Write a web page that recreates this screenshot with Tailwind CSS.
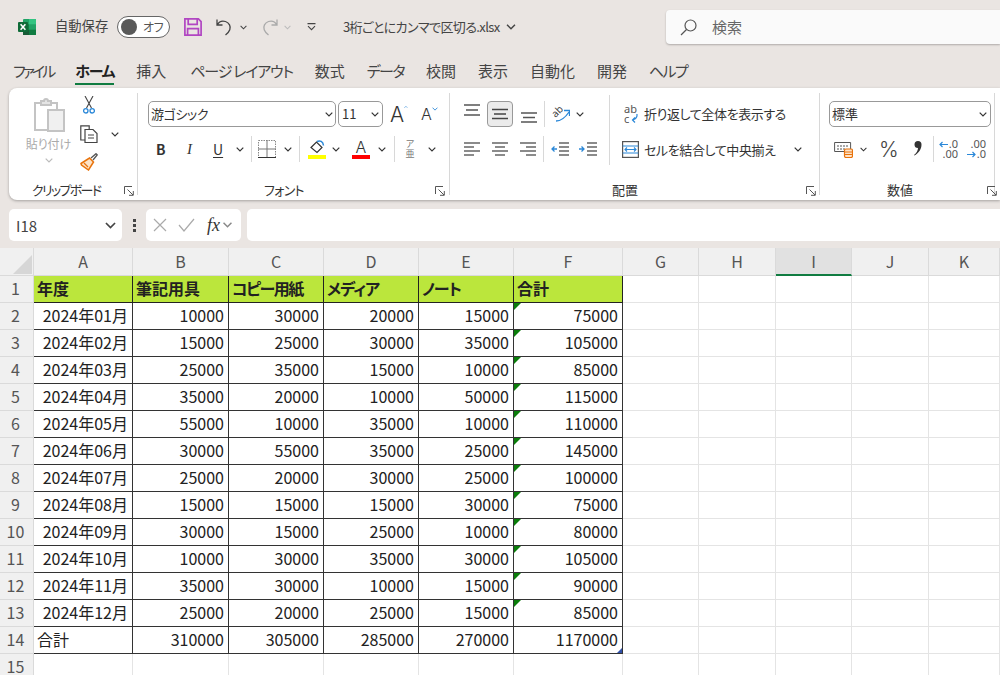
<!DOCTYPE html>
<html lang="ja">
<head>
<meta charset="utf-8">
<script src="https://cdn.jsdelivr.net/npm/@tailwindcss/browser@4"></script>
<title>Excel</title>
</head>
<body class="w-[1000px] h-[675px] overflow-hidden bg-[#eae5e2] text-[#333] font-['Noto_Sans_CJK_JP','Noto_Sans',sans-serif]">
<svg width="0" height="0" class="absolute">
  <symbol id="chev" viewBox="0 0 8 5"><path d="M.7.7 4 4l3.3-3.3" fill="none" stroke="currentColor" stroke-width="1.2"/></symbol>
  <symbol id="launch" viewBox="0 0 10 10"><path d="M.5 8V.5H8M3.5 3.5 9 9M5 9.3h4.3V5" fill="none" stroke="#555" stroke-width="1"/></symbol>
</svg>

<!-- Title bar -->
<header class="h-[54px] flex items-center relative">
  <svg class="ml-[18px] w-[18px] h-[18px]" viewBox="0 0 18 18"><rect x="5" y="1" width="13" height="16" rx="1" fill="#21a366"/><rect x="11" y="1" width="7" height="5.3" fill="#33c481"/><rect x="11" y="11.7" width="7" height="5.3" fill="#107c41"/><rect x="5" y="6.3" width="6" height="5.4" fill="#107c41"/><rect x="5" y="11.7" width="6" height="5.3" fill="#185c37"/><rect y="4" width="10" height="10" rx="1" fill="#0f6b38"/><path d="m2.6 6.2 4.8 5.6M7.4 6.2l-4.8 5.6" stroke="#fff" stroke-width="1.5"/></svg>
  <span class="ml-[19px] w-[53px] text-[13.3px] pb-[2px] leading-none text-[#444] whitespace-nowrap">自動保存</span>
  <div class="ml-[9px] w-[53px] h-[22px] -mt-[1px] rounded-full border border-[#666] bg-white flex items-center pl-[3px]">
    <span class="w-[16px] h-[16px] rounded-full bg-[#595959]"></span>
    <span class="ml-[6px] text-[12px] text-[#555] leading-none tracking-[-0.5px] [font-feature-settings:'palt']">オフ</span>
  </div>
  <svg class="ml-[14px] w-[18px] h-[18px]" viewBox="0 0 18 18" fill="none" stroke="#b146c2" stroke-width="1.7"><path d="M.9.9h13.5l2.7 2.7v13.5H.9z"/><path d="M4.2 1v5.4h9V1M3.6 17v-6.4h10.8V17" /></svg>
  <svg class="ml-[14px] w-[18px] h-[18px]" viewBox="0 0 18 18" fill="none" stroke="#444" stroke-width="1.3"><path d="M1 1.5V7h5.5M1.3 6.8C3 3.6 6.5 2.6 9.500 3.500c3.800 1.200 5.500 5 4.300 8.300-.6 1.800-2.200 3.500-4.300 5.200"/></svg>
  <svg class="ml-[6px] w-[7px] h-[5px] text-[#444]"><use href="#chev"/></svg>
  <svg class="ml-[13px] w-[18px] h-[18px]" viewBox="0 0 18 18" fill="none" stroke="#aaa" stroke-width="1.300"><path d="M17 1.500V7h-5.500M16.700 6.800C15 3.600 11.500 2.600 8.500 3.500c-3.800 1.200-5.500 5-4.300 8.300.6 1.800 2.200 3.500 4.300 5.200"/></svg>
  <svg class="ml-[6px] w-[7px] h-[5px] text-[#bbb]"><use href="#chev"/></svg>
  <svg class="ml-[16px] w-[9px] h-[8px]" viewBox="0 0 9 8" fill="none" stroke="#444" stroke-width="1.100"><path d="M.5.6h8M1 3.200l3.500 3.500L8 3.200"/></svg>
  <span class="ml-[27px] text-[13px] pb-[2px] leading-none text-[#444] whitespace-nowrap tracking-[-0.6px] [font-feature-settings:'palt'] w-[157px]">3桁ごとにカンマで区切る.xlsx</span>
  <svg class="ml-[6px] w-[10px] h-[6px] text-[#444]"><use href="#chev"/></svg>
  <div class="ml-auto self-start mt-[10px] w-[334px] h-[34px] bg-[#fafafa] rounded-l-[4px] shadow-[0_1px_2px_rgba(0,0,0,.25)] flex items-center pl-[14px]">
    <svg class="w-[17px] h-[17px]" viewBox="0 0 17 17" fill="none" stroke="#555" stroke-width="1.200"><circle cx="10.500" cy="6.500" r="5.500"/><path d="M6.500 10.500 1 16"/></svg>
    <span class="ml-[15px] pb-[2px] text-[15px] leading-none text-[#666]">検索</span>
  </div>
</header>

<!-- Tabs -->
<nav class="h-[34px] pl-[13px] flex gap-[22px] text-[15px] text-[#444] leading-[34px] whitespace-nowrap [font-feature-settings:'palt']">
  <span class="tracking-[-2.9px]">ファイル</span>
  <span class="relative font-bold text-[#222] tracking-[-1.3px]">ホーム<i class="absolute left-0 right-0 bottom-[3px] h-[2px] bg-[#107c41]"></i></span>
  <span>挿入</span>
  <span class="ml-[2px] tracking-[-1.2px]">ページ レイアウト</span>
  <span>数式</span>
  <span class="tracking-[-1.6px]">データ</span>
  <span>校閲</span>
  <span>表示</span>
  <span>自動化</span>
  <span>開発</span>
  <span class="tracking-[-1.6px]">ヘルプ</span>
</nav>

<!-- Ribbon -->
<section class="ml-[9px] h-[112px] bg-white rounded-l-[8px] shadow-[0_1px_3px_rgba(0,0,0,.3)] flex py-[5px] text-[#333] [font-feature-settings:'palt']">

  <!-- Clipboard -->
  <div class="w-[129px] shrink-0 border-r border-[#d8d8d8] flex flex-col">
    <div class="flex h-[80px]">
      <div class="w-[70px] flex flex-col items-center pl-[9px]">
        <svg class="mt-[4px] w-[32px] h-[36px]" viewBox="0 0 32 36" fill="none" stroke="#c4c4c4" stroke-width="2"><path d="M20 33H2V6h6M18 6h6v6"/><path d="M8 8V4h3a2 2 0 0 1 4 0h3v4z" fill="#e4e4e4"/><rect x="15" y="13" width="16" height="21" fill="#f0f0f0"/></svg>
        <span class="mt-[3px] text-[12px] text-[#aaa] leading-[16px] whitespace-nowrap">貼り付け</span>
        <svg class="mt-[6px] w-[8px] h-[5px] text-[#bbb]"><use href="#chev"/></svg>
      </div>
      <div class="flex flex-col ml-[1px]">
        <svg class="mt-[3px] ml-[3px] w-[12px] h-[18px]" viewBox="0 0 12 18" fill="none"><path d="M2 0l6.500 12M10 0 3.500 12" stroke="#444" stroke-width="1.100"/><circle cx="2.800" cy="14.800" r="2.200" stroke="#2b88d8" stroke-width="1.300"/><circle cx="9.200" cy="14.800" r="2.200" stroke="#2b88d8" stroke-width="1.300"/></svg>
        <div class="mt-[11px] flex items-center">
          <svg class="w-[18px] h-[18px]" viewBox="0 0 18 18" fill="none" stroke="#444" stroke-width="1.200"><path d="M5 15H.8V.8h8.400V4"/><path d="M5 4.500h8l4 4v9H5z"/><path d="M8 10h6M8 13h6" /></svg>
          <svg class="ml-[13px] w-[8px] h-[5px] text-[#333]"><use href="#chev"/></svg>
        </div>
        <svg class="mt-[10px] w-[18px] h-[18px]" viewBox="0 0 18 18" fill="none"><path d="M11 5 16 .7l1.200 1.200L13 7" stroke="#555" stroke-width="1.300"/><path d="M1 10.500 9.500 5l4 4-5 8-7-5z" fill="#fde3c8" stroke="#e8730c" stroke-width="1.500"/><path d="M4 10l4 4" stroke="#e8730c" stroke-width="1.200"/></svg>
      </div>
    </div>
    <div class="mt-auto -mb-[4px] h-[16px] flex items-center">
      <span class="ml-[23px] pb-[4px] text-[13px] tracking-[-1.7px] leading-none whitespace-nowrap">クリップボード</span>
      <svg class="ml-auto mr-[3px] w-[10px] h-[10px]"><use href="#launch"/></svg>
    </div>
  </div>

  <!-- Font -->
  <div class="w-[312px] shrink-0 border-r border-[#d8d8d8] flex flex-col">
    <div class="mt-[8px] h-[26px] flex items-center pl-[10px]">
      <div class="w-[188px] h-[26px] border border-[#999] rounded-[5px] flex items-center pl-[2px] pr-[2px]">
        <span class="pb-[2px] text-[13px] leading-none tracking-[-0.4px]">游ゴシック</span>
        <svg class="ml-auto w-[8px] h-[5px]"><use href="#chev"/></svg>
      </div>
      <div class="ml-[2px] w-[45px] h-[26px] border border-[#999] rounded-[5px] flex items-center pl-[3px] pr-[3px]">
        <span class="pb-[2px] text-[13px] leading-none">11</span>
        <svg class="ml-auto w-[8px] h-[5px]"><use href="#chev"/></svg>
      </div>
      <span class="ml-[7px] w-[18px] flex items-start text-[#333]">
        <span class="text-[21px] leading-none font-light font-['Inter',sans-serif]">A</span>
        <svg class="mt-[1px] w-[6px] h-[4px] -scale-y-100 text-[#2b88d8]"><use href="#chev"/></svg>
      </span>
      <span class="ml-[13px] w-[18px] flex items-start">
        <span class="text-[16px] leading-none font-light font-['Inter',sans-serif]">A</span>
        <svg class="mt-[1px] w-[6px] h-[4px] text-[#2b88d8]"><use href="#chev"/></svg>
      </span>
    </div>
    <div class="mt-[9px] h-[26px] flex items-center">
      <span class="ml-[18px] w-[12px] text-[14px] font-bold leading-none">B</span>
      <span class="ml-[19px] w-[12px] text-[15px] italic leading-none font-['Liberation_Serif',serif]">I</span>
      <span class="ml-[14px] w-[12px] text-[14px] underline underline-offset-2 leading-none">U</span>
      <svg class="ml-[11px] w-[8px] h-[5px]"><use href="#chev"/></svg>
      <i class="ml-[7px] w-px h-[26px] bg-[#d8d8d8]"></i>
      <svg class="ml-[6px] w-[18px] h-[18px]" viewBox="0 0 18 18" fill="none"><path d="M.5.5h17v17H.5z" stroke="#888" stroke-dasharray="1.500 1"/><path d="M9 0v18M0 9h18" stroke="#777"/><path d="M0 17.500h18" stroke="#333"/></svg>
      <svg class="ml-[8px] w-[8px] h-[5px]"><use href="#chev"/></svg>
      <i class="ml-[7px] w-px h-[26px] bg-[#d8d8d8]"></i>
      <span class="ml-[8px] w-[18px] flex flex-col items-center">
        <svg class="w-[16px] h-[14px]" viewBox="0 0 16 14" fill="none"><path d="M2 7.500 7.500 2l5.500 5.500L8 12.500z" stroke="#333" stroke-width="1.200"/><path d="M8 1.500c3-1.500 6 0 6.500 4" stroke="#2b88d8" stroke-width="1.500"/></svg>
        <i class="mt-[1px] w-[18px] h-[4px] bg-[#ffff00]"></i>
      </span>
      <svg class="ml-[6px] w-[8px] h-[5px]"><use href="#chev"/></svg>
      <span class="ml-[12px] w-[18px] flex flex-col items-center">
        <span class="h-[14px] text-[16px] leading-[14px] font-light font-['Inter',sans-serif]">A</span>
        <i class="mt-[1px] w-[18px] h-[4px] bg-[#ff0000]"></i>
      </span>
      <svg class="ml-[8px] w-[8px] h-[5px]"><use href="#chev"/></svg>
      <i class="ml-[8px] w-px h-[26px] bg-[#d8d8d8]"></i>
      <span class="ml-[10px] w-[10px] flex flex-col items-center text-[9px] leading-[10px] text-[#777]"><span>ア</span><span>亜</span></span>
      <svg class="ml-[13px] w-[8px] h-[5px]"><use href="#chev"/></svg>
    </div>
    <div class="mt-auto -mb-[4px] h-[16px] flex items-center relative">
      <span class="ml-[126px] pb-[4px] text-[13px] tracking-[-0.7px] leading-none whitespace-nowrap">フォント</span>
      <svg class="ml-auto mr-[4px] w-[10px] h-[10px]"><use href="#launch"/></svg>
    </div>
  </div>

  <!-- Alignment -->
  <div class="w-[370px] shrink-0 border-r border-[#d8d8d8] flex flex-col">
    <div class="flex h-[71px]">
      <div class="w-[160px] border-r border-[#d8d8d8] h-[70px] mt-[2px]">
        <div class="mt-[6px] h-[26px] flex items-center">
          <svg class="ml-[14px] w-[16px] h-[12px] -mt-[8px]" viewBox="0 0 16 12" stroke="#555" stroke-width="1.300"><path d="M0 1h16M2 6h12M0 11h16"/></svg>
          <span class="ml-[7px] w-[26px] h-[26px] border border-[#999] rounded-[4px] bg-[#ebebeb] flex items-center justify-center">
            <svg class="w-[16px] h-[12px]" viewBox="0 0 16 12" stroke="#444" stroke-width="1.300"><path d="M0 1.500h16M2 6h12M0 10.500h16"/></svg>
          </span>
          <svg class="ml-[8px] w-[16px] h-[11px] mt-[7px]" viewBox="0 0 16 11" stroke="#555" stroke-width="1.300"><path d="M0 1h16M2 5.500h12M0 10h16"/></svg>
          <i class="ml-[7px] w-px h-[26px] bg-[#d8d8d8]"></i>
          <span class="ml-[7px] w-[18px] h-[18px] relative flex items-start">
            <span class="-rotate-45 -ml-[1px] text-[10px] leading-[12px] text-[#444] font-['Noto_Sans',sans-serif]">ab</span>
            <svg class="absolute left-0 top-0 w-[18px] h-[18px]" viewBox="0 0 18 18" fill="none" stroke="#2b88d8" stroke-width="1.300"><path d="M4 16c5 0 9-3 13-9M12 5.500h5.500V11"/></svg>
          </span>
          <svg class="ml-[6px] w-[8px] h-[5px]"><use href="#chev"/></svg>
        </div>
        <div class="mt-[9px] h-[26px] flex items-center">
          <svg class="ml-[14px] w-[16px] h-[14px]" viewBox="0 0 16 14" stroke="#666" stroke-width="1.300"><path d="M0 1h16M0 5h10M0 9h16M0 13h10"/></svg>
          <svg class="ml-[12px] w-[16px] h-[14px]" viewBox="0 0 16 14" stroke="#666" stroke-width="1.300"><path d="M0 1h16M3 5h10M0 9h16M3 13h10"/></svg>
          <svg class="ml-[12px] w-[16px] h-[14px]" viewBox="0 0 16 14" stroke="#666" stroke-width="1.300"><path d="M0 1h16M6 5h10M0 9h16M6 13h10"/></svg>
          <i class="ml-[7px] w-px h-[26px] bg-[#d8d8d8]"></i>
          <svg class="ml-[7px] w-[18px] h-[14px]" viewBox="0 0 18 14" fill="none" stroke-width="1.300"><path d="M8 1h10M8 5h10M8 9h10M8 13h10" stroke="#666"/><path d="M6 7H1m2.500-2.500L1 7l2.500 2.500" stroke="#2b88d8"/></svg>
          <svg class="ml-[10px] w-[18px] h-[14px]" viewBox="0 0 18 14" fill="none" stroke-width="1.300"><path d="M8 1h10M8 5h10M8 9h10M8 13h10" stroke="#666"/><path d="M0 7h5m-2.500-2.500L5 7 2.500 9.500" stroke="#2b88d8"/></svg>
        </div>
      </div>
      <div class="pl-[12px] pt-[8px]">
        <div class="h-[26px] flex items-center">
          <span class="ml-[2px] w-[15px] flex flex-col items-start text-[11px] leading-[10px] text-[#555] font-['Noto_Sans',sans-serif]"><span>ab</span><span class="flex">c<svg class="w-[9px] h-[10px]" viewBox="0 0 9 10" fill="none" stroke="#2b88d8" stroke-width="1.200"><path d="M7-2c2 3 1 7-3 8M6 3.500 3.500 6 6 8.500"/></svg></span></span>
          <span class="ml-[5px] pb-[2px] text-[13px] tracking-[-0.4px] leading-none whitespace-nowrap">折り返して全体を表示する</span>
        </div>
        <div class="mt-[9px] h-[26px] flex items-center">
          <svg class="w-[17px] h-[17px]" viewBox="0 0 17 17" fill="none"><rect x=".6" y=".6" width="15.800" height="15.800" stroke="#555" stroke-width="1.200"/><path d="M.6 5h15.800M.6 12h15.800" stroke="#2b88d8" stroke-width="1.200"/><path d="M3 8.500h11M5 6.500l-2 2 2 2M12 6.500l2 2-2 2" stroke="#2b88d8" stroke-width="1.100"/></svg>
          <span class="ml-[5px] text-[13px] tracking-[-0.4px] leading-none whitespace-nowrap">セルを結合して中央揃え</span>
          <svg class="ml-[19px] w-[8px] h-[5px]"><use href="#chev"/></svg>
        </div>
      </div>
    </div>
    <div class="mt-auto -mb-[4px] h-[16px] flex items-center">
      <span class="ml-[162px] pb-[4px] text-[13px] leading-none whitespace-nowrap">配置</span>
      <svg class="ml-auto mr-[3px] w-[10px] h-[10px]"><use href="#launch"/></svg>
    </div>
  </div>

  <!-- Number -->
  <div class="w-[175px] shrink-0 border-r border-[#d8d8d8] flex flex-col">
    <div class="mt-[8px] h-[26px] flex items-center pl-[9px]">
      <div class="w-[162px] h-[26px] border border-[#999] rounded-[5px] flex items-center pl-[2px] pr-[3px]">
        <span class="pb-[2px] text-[13px] leading-none">標準</span>
        <svg class="ml-auto w-[8px] h-[5px]"><use href="#chev"/></svg>
      </div>
    </div>
    <div class="mt-[9px] h-[26px] flex items-center">
      <svg class="ml-[14px] w-[19px] h-[18px]" viewBox="0 0 19 18" fill="none"><path d="M.6 2.500h16v9H.6z" stroke="#555"/><path d="M3 6h11M3 9h8" stroke="#555" stroke-dasharray="2 1"/><rect x="10.500" y="9" width="8" height="8.500" rx="1.500" fill="#fde3c8" stroke="#e8730c" stroke-width="1.200"/><path d="M10.500 12h8M10.500 14.500h8" stroke="#e8730c"/></svg>
      <svg class="ml-[7px] w-[7px] h-[5px]"><use href="#chev"/></svg>
      <span class="ml-[12px] w-[20px] text-[21px] leading-none font-light font-['Inter',sans-serif] text-[#444]">%</span>
      <svg class="ml-[14px] w-[10px] h-[16px] -mt-[3px]" viewBox="0 0 10 16"><path d="M1.500 4.500A3.500 3.500 0 1 1 8.500 4.500C8.500 9 6 13 1.500 15.500L1 15C3.500 13 5 10.500 5 8A3.500 3.500 0 0 1 1.500 4.500z" fill="#333"/></svg>
      <i class="ml-[10px] w-px h-[26px] bg-[#d8d8d8]"></i>
      <span class="ml-[6px] w-[18px] flex flex-col items-end text-[11px] leading-[10px] text-[#555] font-['Noto_Sans',sans-serif]">
        <span class="flex items-center"><svg class="w-[9px] h-[7px] mr-[1px]" viewBox="0 0 9 7" fill="none" stroke="#2b88d8" stroke-width="1.200"><path d="M9 3.500H1M3.500 1 1 3.500 3.500 6"/></svg>.0</span><span>.00</span>
      </span>
      <span class="ml-[10px] w-[18px] flex flex-col items-end text-[11px] leading-[10px] text-[#555] font-['Noto_Sans',sans-serif]">
        <span>.00</span><span class="flex items-center"><svg class="w-[9px] h-[7px] mr-[1px]" viewBox="0 0 9 7" fill="none" stroke="#2b88d8" stroke-width="1.200"><path d="M0 3.500h8M5.500 1 8 3.500 5.500 6"/></svg>.0</span>
      </span>
    </div>
    <div class="mt-auto -mb-[4px] h-[16px] flex items-center">
      <span class="ml-[67px] pb-[4px] text-[13px] leading-none whitespace-nowrap">数値</span>
      <svg class="ml-auto mr-[-3px] w-[10px] h-[10px]"><use href="#launch"/></svg>
    </div>
  </div>
</section>

<!-- Formula bar -->
<div class="mt-[9px] h-[32px] flex">
  <div class="ml-[9px] w-[113px] bg-white rounded-[5px] flex items-center pl-[7px] pr-[6px]">
    <span class="text-[15px] text-[#444] leading-none">I18</span>
    <svg class="ml-auto w-[11px] h-[7px] text-[#444]"><use href="#chev"/></svg>
  </div>
  <div class="w-[24px] flex flex-col items-center justify-center gap-[2px]">
    <i class="w-[3px] h-[3px] bg-[#444]"></i><i class="w-[3px] h-[3px] bg-[#444]"></i><i class="w-[3px] h-[3px] bg-[#444]"></i>
  </div>
  <div class="w-[95px] bg-white rounded-[5px] flex items-center">
    <svg class="ml-[7px] w-[14px] h-[14px]" viewBox="0 0 14 14" stroke="#aaa" stroke-width="1.200"><path d="m1 1 12 12M13 1 1 13"/></svg>
    <svg class="ml-[11px] w-[17px] h-[14px]" viewBox="0 0 17 14" fill="none" stroke="#aaa" stroke-width="1.200"><path d="m1 7 5 6L16 1"/></svg>
    <span class="ml-[12px] w-[16px] text-[18px] italic leading-none text-[#333] font-['Liberation_Serif',serif]">fx</span>
    <svg class="-ml-[1px] w-[11px] h-[6px] text-[#888]"><use href="#chev"/></svg>
  </div>
  <div class="ml-[6px] flex-1 bg-white rounded-l-[5px]"></div>
</div>

<!-- Sheet -->
<main class="mt-[7px] bg-white grid grid-cols-[34px_99px_96px_95px_95px_95px_109px_76px_77px_76px_77px_71px] grid-rows-[28px] auto-rows-[27px] text-[16px] leading-[24px] text-[#222]
  [&>div]:border-r [&>div]:border-b [&>div]:border-[#e4e4e4]
  [&>h6]:bg-[#f0f0f0] [&>h6]:text-center [&>h6]:text-[#555] [&>h6]:font-normal [&>h6]:border-r [&>h6]:border-b [&>h6]:border-[#dadada] [&>h6]:text-[16px] [&>h6:nth-child(-n+12)]:leading-[27px] [&>h6:nth-child(n+13)]:pr-[2px]
  [&>h5]:bg-[#bbe63c] [&>h5]:font-bold [&>h5]:text-[16px] [&>h5]:pl-[3px] [&>h5]:border-r [&>h5]:border-b [&>h5]:border-[#222] [&>h5]:whitespace-nowrap [&>h5]:overflow-hidden
  [&>p]:text-right [&>p]:pr-[4px] [&>p]:border-r [&>p]:border-b [&>p]:border-[#333] [&>p]:relative">
  <h6 class="relative"><i class="absolute right-[1px] bottom-[1px] w-[19px] h-[19px] bg-[#d6d6d6] [clip-path:polygon(100%_0,100%_100%,0_100%)]"></i></h6>
  <h6>A</h6><h6>B</h6><h6>C</h6><h6>D</h6><h6>E</h6><h6>F</h6><h6>G</h6><h6>H</h6>
  <h6 class="bg-[#e1e1e1]! border-b-2! border-b-[#107c41]!">I</h6><h6>J</h6><h6>K</h6>

  <h6>1</h6><h5>年度</h5><h5>筆記用具</h5><h5 class="tracking-[-1.5px] [font-feature-settings:'palt']">コピー用紙</h5><h5 class="tracking-[-1px] [font-feature-settings:'palt']">メディア</h5><h5 class="tracking-[-1px] [font-feature-settings:'palt']">ノート</h5><h5>合計</h5><div></div><div></div><div></div><div></div><div></div>
  <h6>2</h6><p>2024年01月</p><p>10000</p><p>30000</p><p>20000</p><p>15000</p><p><i class="absolute left-0 top-0 w-[7px] h-[7px] bg-[#0a7d0a] [clip-path:polygon(0_0,100%_0,0_100%)]"></i>75000</p><div></div><div></div><div></div><div></div><div></div>
  <h6>3</h6><p>2024年02月</p><p>15000</p><p>25000</p><p>30000</p><p>35000</p><p><i class="absolute left-0 top-0 w-[7px] h-[7px] bg-[#0a7d0a] [clip-path:polygon(0_0,100%_0,0_100%)]"></i>105000</p><div></div><div></div><div></div><div></div><div></div>
  <h6>4</h6><p>2024年03月</p><p>25000</p><p>35000</p><p>15000</p><p>10000</p><p><i class="absolute left-0 top-0 w-[7px] h-[7px] bg-[#0a7d0a] [clip-path:polygon(0_0,100%_0,0_100%)]"></i>85000</p><div></div><div></div><div></div><div></div><div></div>
  <h6>5</h6><p>2024年04月</p><p>35000</p><p>20000</p><p>10000</p><p>50000</p><p><i class="absolute left-0 top-0 w-[7px] h-[7px] bg-[#0a7d0a] [clip-path:polygon(0_0,100%_0,0_100%)]"></i>115000</p><div></div><div></div><div></div><div></div><div></div>
  <h6>6</h6><p>2024年05月</p><p>55000</p><p>10000</p><p>35000</p><p>10000</p><p><i class="absolute left-0 top-0 w-[7px] h-[7px] bg-[#0a7d0a] [clip-path:polygon(0_0,100%_0,0_100%)]"></i>110000</p><div></div><div></div><div></div><div></div><div></div>
  <h6>7</h6><p>2024年06月</p><p>30000</p><p>55000</p><p>35000</p><p>25000</p><p><i class="absolute left-0 top-0 w-[7px] h-[7px] bg-[#0a7d0a] [clip-path:polygon(0_0,100%_0,0_100%)]"></i>145000</p><div></div><div></div><div></div><div></div><div></div>
  <h6>8</h6><p>2024年07月</p><p>25000</p><p>20000</p><p>30000</p><p>25000</p><p><i class="absolute left-0 top-0 w-[7px] h-[7px] bg-[#0a7d0a] [clip-path:polygon(0_0,100%_0,0_100%)]"></i>100000</p><div></div><div></div><div></div><div></div><div></div>
  <h6>9</h6><p>2024年08月</p><p>15000</p><p>15000</p><p>15000</p><p>30000</p><p><i class="absolute left-0 top-0 w-[7px] h-[7px] bg-[#0a7d0a] [clip-path:polygon(0_0,100%_0,0_100%)]"></i>75000</p><div></div><div></div><div></div><div></div><div></div>
  <h6>10</h6><p>2024年09月</p><p>30000</p><p>15000</p><p>25000</p><p>10000</p><p><i class="absolute left-0 top-0 w-[7px] h-[7px] bg-[#0a7d0a] [clip-path:polygon(0_0,100%_0,0_100%)]"></i>80000</p><div></div><div></div><div></div><div></div><div></div>
  <h6>11</h6><p>2024年10月</p><p>10000</p><p>30000</p><p>35000</p><p>30000</p><p><i class="absolute left-0 top-0 w-[7px] h-[7px] bg-[#0a7d0a] [clip-path:polygon(0_0,100%_0,0_100%)]"></i>105000</p><div></div><div></div><div></div><div></div><div></div>
  <h6>12</h6><p>2024年11月</p><p>35000</p><p>30000</p><p>10000</p><p>15000</p><p><i class="absolute left-0 top-0 w-[7px] h-[7px] bg-[#0a7d0a] [clip-path:polygon(0_0,100%_0,0_100%)]"></i>90000</p><div></div><div></div><div></div><div></div><div></div>
  <h6>13</h6><p>2024年12月</p><p>25000</p><p>20000</p><p>25000</p><p>15000</p><p><i class="absolute left-0 top-0 w-[7px] h-[7px] bg-[#0a7d0a] [clip-path:polygon(0_0,100%_0,0_100%)]"></i>85000</p><div></div><div></div><div></div><div></div><div></div>
  <h6>14</h6><p class="text-left! pl-[3px]">合計</p><p>310000</p><p>305000</p><p>285000</p><p>270000</p><p>1170000<i class="absolute right-0 bottom-0 w-[5px] h-[5px] bg-[#2f4fa8] [clip-path:polygon(100%_0,100%_100%,0_100%)]"></i></p><div></div><div></div><div></div><div></div><div></div>
  <h6>15</h6><div></div><div></div><div></div><div></div><div></div><div></div><div></div><div></div><div></div><div></div><div></div>
</main>
</body>
</html>
